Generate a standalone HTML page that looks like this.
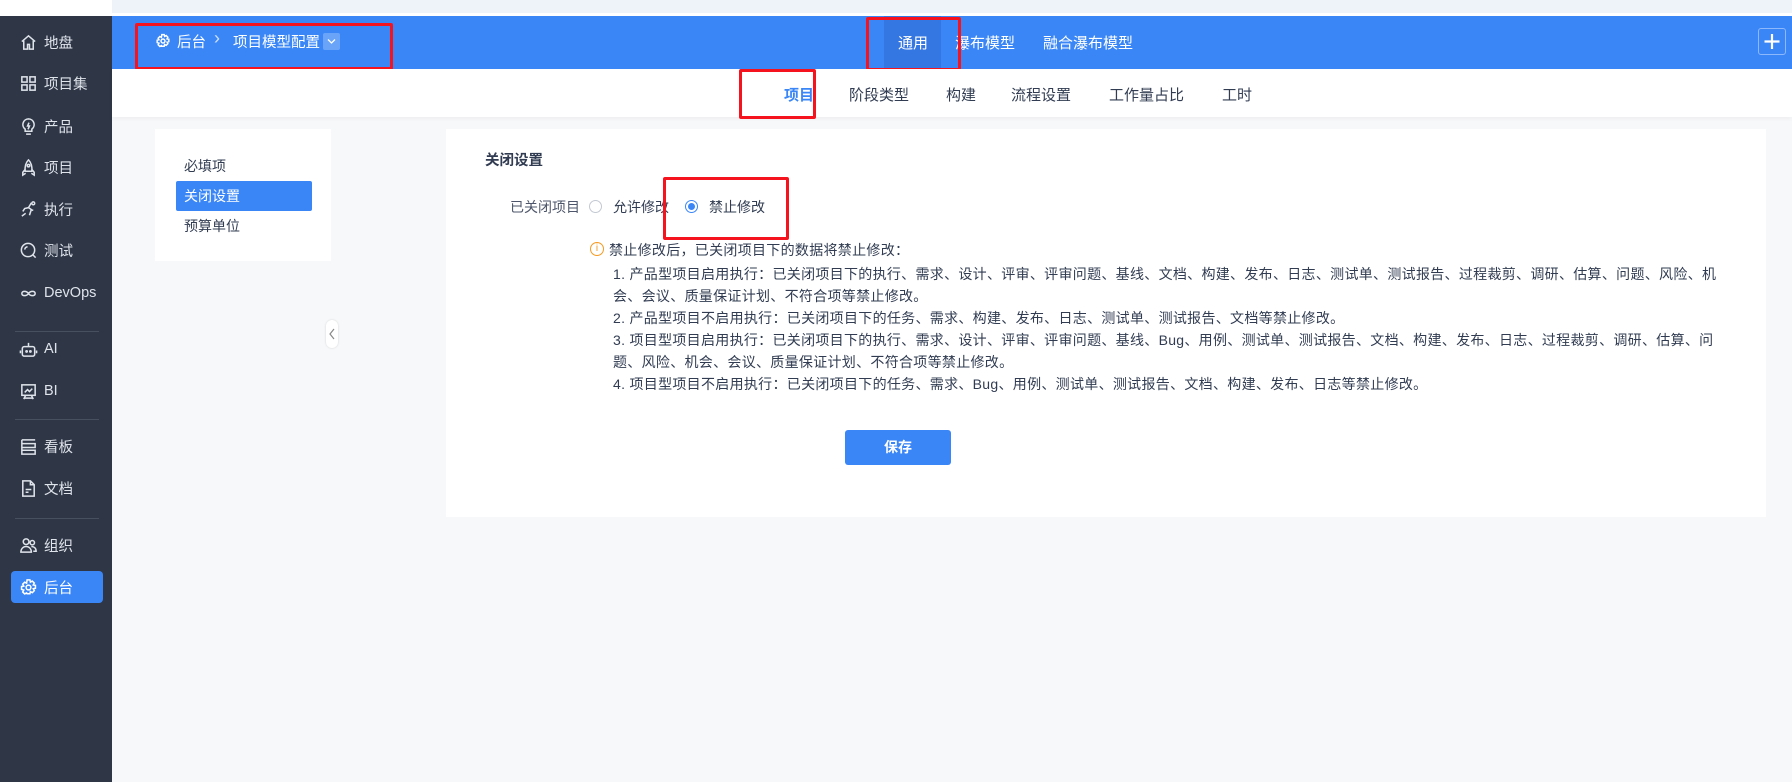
<!DOCTYPE html>
<html><head><meta charset="utf-8">
<style>
*{margin:0;padding:0;box-sizing:border-box}
body{width:1792px;height:782px;overflow:hidden;background:#f7f8fa;font-family:"Liberation Sans","Noto Sans CJK SC",sans-serif;position:relative;color:#313c52}
.abs{position:absolute}
.top{left:0;top:0;width:1792px;height:16px;background:#fff}
.top .bar{position:absolute;left:112px;top:0;width:1680px;height:13px;background:#eef2f9}
.side{left:0;top:16px;width:112px;height:766px;background:#2f3747}
.si{position:absolute;left:19px;height:22px;display:flex;align-items:center;color:#dfe3ea;font-size:14.5px}
.si svg{width:19px;height:19px;margin-right:6px;fill:none;stroke:#dfe3ea;stroke-width:1.6}
.sep{position:absolute;left:15px;width:84px;height:1px;background:#46505f}
.hdr{left:112px;top:16px;width:1680px;height:53px;background:#3a86f7}
.wt{color:#fff;font-size:15px;position:absolute;white-space:nowrap}
.red{position:absolute;border:3px solid #f5141e;border-radius:2px}
.sub{left:112px;top:69px;width:1680px;height:48px;background:#fff;box-shadow:0 2px 4px rgba(0,0,0,.04)}
.tab{position:absolute;top:84px;font-size:15px;color:#313c52;white-space:nowrap}
.card{background:#fff;position:absolute}
.txt{position:absolute;left:613px;font-size:14px;letter-spacing:.3px;white-space:nowrap;color:#313c52}
</style></head><body>
<div class="abs top"><div class="bar"></div></div>
<div class="abs side"></div>
<div class="si" style="top:31px"><svg viewBox="0 0 20 20"><path d="M3 9 10 3l7 6M5 8v9h4v-5h2v5h4V8"/></svg>地盘</div>
<div class="si" style="top:72px"><svg viewBox="0 0 20 20"><rect x="3" y="3" width="5.5" height="5.5"/><rect x="11.5" y="3" width="5.5" height="5.5"/><rect x="3" y="11.5" width="5.5" height="5.5"/><rect x="11.5" y="11.5" width="5.5" height="5.5"/></svg>项目集</div>
<div class="si" style="top:115px"><svg viewBox="0 0 20 20"><path d="M10 2a6 6 0 0 0-3.5 10.8V15h7v-2.2A6 6 0 0 0 10 2zM7.5 18h5M10.5 6 9 9.5h2L9.5 13"/></svg>产品</div>
<div class="si" style="top:156px"><svg viewBox="0 0 20 20"><path d="M10 2c-3 3-4 7-3.5 12h7C14 9 13 5 10 2zM6.5 12 4 15v3l3-2M13.5 12l2.5 3v3l-3-2"/><circle cx="10" cy="8" r="1.3"/></svg>项目</div>
<div class="si" style="top:198px"><svg viewBox="0 0 20 20"><path d="M13 3l-3 5 3 2-2 6M10 8 6 9l-2 3M12 10l3 1M3 17l4-3"/><circle cx="15" cy="3.5" r="1.5"/></svg>执行</div>
<div class="si" style="top:239px"><svg viewBox="0 0 20 20"><circle cx="9.5" cy="9.5" r="7"/><path d="M14.5 14.5l3 3M6 9a3.5 3.5 0 0 1 3-3"/></svg>测试</div>
<div class="si" style="top:282px"><svg viewBox="0 0 20 20"><path d="M10 10c-2-3-7-3-7 0s5 3 7 0 7-3 7 0-5 3-7 0z"/></svg>DevOps</div>
<div class="sep" style="top:331px"></div>
<div class="si" style="top:338px"><svg viewBox="0 0 20 20"><rect x="3.5" y="7" width="13" height="10" rx="2"/><path d="M10 3v4M1.5 11v3M18.5 11v3"/><circle cx="8" cy="12" r=".7"/><circle cx="12" cy="12" r=".7"/></svg>AI</div>
<div class="si" style="top:380px"><svg viewBox="0 0 20 20"><rect x="3" y="3" width="14" height="11"/><path d="M6 11l3-3 2 2 3-3M7 14l-2 4M13 14l2 4M6 17h8"/></svg>BI</div>
<div class="sep" style="top:419px"></div>
<div class="si" style="top:435px"><svg viewBox="0 0 20 20"><path d="M3 3h14M3 7h14v4H3zM3 14h14v4H3zM3 3v15"/></svg>看板</div>
<div class="si" style="top:477px"><svg viewBox="0 0 20 20"><path d="M4 2h8l4 4v12H4zM12 2v4h4M7 11h6M7 14h3"/></svg>文档</div>
<div class="sep" style="top:518px"></div>
<div class="si" style="top:534px"><svg viewBox="0 0 20 20"><circle cx="7.5" cy="6" r="3"/><circle cx="14" cy="7" r="2.3"/><path d="M2 17c0-4 3-6 5.5-6S13 13 13 17zM13 11c2.5 0 5 1.5 5 5h-3"/></svg>组织</div>
<div class="abs" style="left:11px;top:571px;width:92px;height:32px;background:#3a86f7;border-radius:4px"></div>
<div class="si" style="top:576px;color:#fff"><svg viewBox="0 0 20 20" style="stroke:#fff"><circle cx="10" cy="10" r="2.5"/><path d="M8.5 2h3l.5 2.3 2-1.1 2.1 2.1-1.1 2 2.3.5v3l-2.3.5 1.1 2-2.1 2.1-2-1.1-.5 2.3h-3L8 15.7l-2 1.1-2.1-2.1 1.1-2L2.7 12V9l2.3-.5-1.1-2L6 4.4l2 1.1z"/></svg>后台</div>

<div class="abs hdr"></div>
<svg class="abs" style="left:155px;top:33px" width="16" height="16" viewBox="0 0 20 20" fill="none" stroke="#fff" stroke-width="1.8"><circle cx="10" cy="10" r="2.5"/><path d="M8.5 2h3l.5 2.3 2-1.1 2.1 2.1-1.1 2 2.3.5v3l-2.3.5 1.1 2-2.1 2.1-2-1.1-.5 2.3h-3L8 15.7l-2 1.1-2.1-2.1 1.1-2L2.7 12V9l2.3-.5-1.1-2L6 4.4l2 1.1z"/></svg>
<div class="wt" style="left:177px;top:31px;font-size:14.5px">后台</div>
<div class="wt" style="left:214px;top:28px;font-size:18px;color:#cfe0fc">›</div>
<div class="wt" style="left:233px;top:31px;font-size:14.5px">项目模型配置</div>
<div class="abs" style="left:323px;top:33px;width:17px;height:17px;background:#6aa4f9;border-radius:2px"></div>
<svg class="abs" style="left:327px;top:38px" width="9" height="7" viewBox="0 0 9 7"><path d="M1 1.5l3.5 3.5L8 1.5" stroke="#fff" fill="none" stroke-width="1.3"/></svg>
<div class="red" style="left:135px;top:23px;width:258px;height:47px"></div>
<div class="abs" style="left:884px;top:16px;width:57px;height:53px;background:#3577e2"></div>
<div class="wt" style="left:898px;top:32px">通用</div>
<div class="wt" style="left:955px;top:32px">瀑布模型</div>
<div class="wt" style="left:1043px;top:32px">融合瀑布模型</div>
<div class="red" style="left:866px;top:17px;width:95px;height:54px"></div>
<div class="abs" style="left:1758px;top:28px;width:28px;height:27px;border:1px solid #8db8fb;border-radius:3px"></div>
<svg class="abs" style="left:1758px;top:28px" width="28" height="27" viewBox="0 0 28 27"><path d="M14 6v15M6.5 13.5h15" stroke="#fff" stroke-width="2.2"/></svg>

<div class="abs sub"></div>
<div class="tab" style="left:784px;color:#3a86f7;font-weight:bold">项目</div>
<div class="tab" style="left:849px">阶段类型</div>
<div class="tab" style="left:946px">构建</div>
<div class="tab" style="left:1011px">流程设置</div>
<div class="tab" style="left:1109px">工作量占比</div>
<div class="tab" style="left:1222px">工时</div>
<div class="red" style="left:739px;top:69px;width:77px;height:50px"></div>

<div class="card" style="left:155px;top:129px;width:176px;height:132px"></div>
<div class="abs" style="left:184px;top:156px;font-size:14px">必填项</div>
<div class="abs" style="left:176px;top:181px;width:136px;height:30px;background:#3a86f7;border-radius:2px"></div>
<div class="abs" style="left:184px;top:186px;font-size:14px;color:#fff">关闭设置</div>
<div class="abs" style="left:184px;top:216px;font-size:14px">预算单位</div>
<div class="abs" style="left:326px;top:320px;width:12px;height:28px;background:#fff;border-radius:6px;box-shadow:0 0 2px rgba(0,0,0,.15)"></div>
<svg class="abs" style="left:328px;top:328px" width="8" height="12" viewBox="0 0 8 12"><path d="M6 1 2 6l4 5" stroke="#888" fill="none" stroke-width="1.2"/></svg>

<div class="card" style="left:446px;top:129px;width:1320px;height:388px"></div>
<div class="abs" style="left:485px;top:149px;font-size:14.5px;font-weight:bold">关闭设置</div>
<div class="abs" style="left:510px;top:197px;font-size:14px;color:#4d566a">已关闭项目</div>
<div class="abs" style="left:589px;top:200px;width:13px;height:13px;border:1px solid #c3c8d2;border-radius:50%"></div>
<div class="abs" style="left:613px;top:197px;font-size:14px">允许修改</div>
<div class="abs" style="left:685px;top:200px;width:13px;height:13px;border:1px solid #3a86f7;border-radius:50%;background:#fff"><div style="width:7px;height:7px;border-radius:50%;background:#3a86f7;margin:2px"></div></div>
<div class="abs" style="left:709px;top:197px;font-size:14px">禁止修改</div>
<div class="red" style="left:663px;top:177px;width:126px;height:63px"></div>

<div class="abs" style="left:590px;top:242px;width:14px;height:14px;border:1.3px solid #f59a23;border-radius:50%;color:#f59a23;font-size:10px;line-height:12px;text-align:center">i</div>
<div class="txt" style="left:609px;top:240px">禁止修改后，已关闭项目下的数据将禁止修改：</div>
<div class="txt" style="top:264px">1. 产品型项目启用执行：已关闭项目下的执行、需求、设计、评审、评审问题、基线、文档、构建、发布、日志、测试单、测试报告、过程裁剪、调研、估算、问题、风险、机</div>
<div class="txt" style="top:286px">会、会议、质量保证计划、不符合项等禁止修改。</div>
<div class="txt" style="top:308px">2. 产品型项目不启用执行：已关闭项目下的任务、需求、构建、发布、日志、测试单、测试报告、文档等禁止修改。</div>
<div class="txt" style="top:330px">3. 项目型项目启用执行：已关闭项目下的执行、需求、设计、评审、评审问题、基线、Bug、用例、测试单、测试报告、文档、构建、发布、日志、过程裁剪、调研、估算、问</div>
<div class="txt" style="top:352px">题、风险、机会、会议、质量保证计划、不符合项等禁止修改。</div>
<div class="txt" style="top:374px">4. 项目型项目不启用执行：已关闭项目下的任务、需求、Bug、用例、测试单、测试报告、文档、构建、发布、日志等禁止修改。</div>

<div class="abs" style="left:845px;top:430px;width:106px;height:35px;background:#3a86f7;border-radius:3px;color:#fff;font-size:14px;font-weight:bold;text-align:center;line-height:35px">保存</div>
</body></html>
